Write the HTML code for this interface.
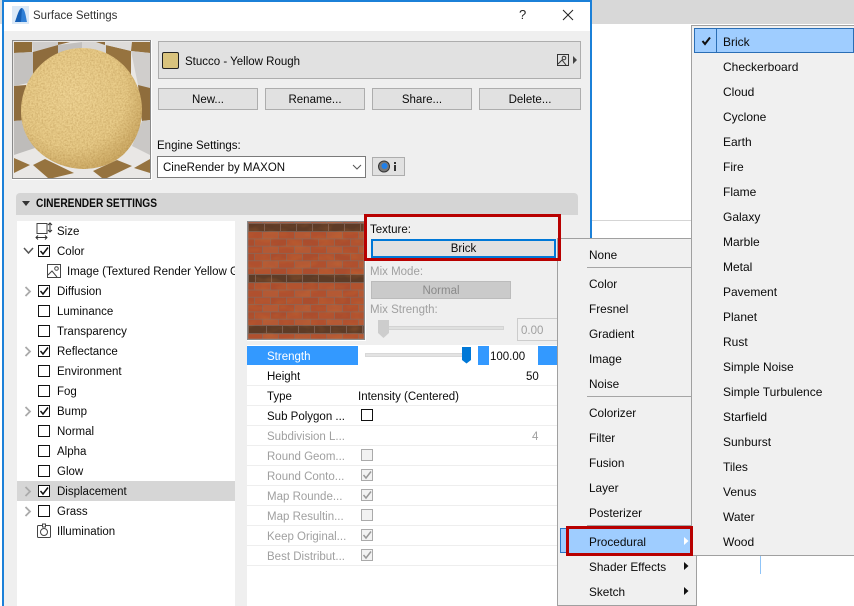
<!DOCTYPE html>
<html><head><meta charset="utf-8"><style>
*{box-sizing:border-box}
html,body{margin:0;padding:0;width:854px;height:606px;overflow:hidden;background:#fff}
body{position:relative;font:11.5px/16px "Liberation Sans",sans-serif;color:#0a0a0a}
.a,.t,.b{position:absolute}
.t{white-space:nowrap;height:14px}
.b{background:#e1e1e1;border:1px solid #adadad;text-align:center}
.g{color:#a0a0a0}
.m{font-size:11.8px;line-height:14px}
.sm{font-size:12px;line-height:14px}
.cb{position:absolute;width:12px;height:12px;border:1px solid #111;background:#fff}
.cb.d{border-color:#aaa;background:#f2f2f2}
.cb svg{position:absolute;left:0;top:0}
.s{position:absolute;left:247px;width:310px;height:1px;background:#eee}
.sep{position:absolute;left:587px;width:109px;height:1px;background:#a5a5a5}
</style></head><body>
<!-- background -->
<div class="a" style="left:592px;top:0;width:262px;height:24px;background:#d8d8d8"></div>
<div class="a" style="left:592px;top:220px;width:100px;height:1px;background:#d5d5d5"></div>
<div class="a" style="left:760px;top:555px;width:1px;height:19px;background:#8fc4f8"></div>
<div class="a" style="left:0;top:0;width:2px;height:24px;background:#ddd"></div>

<!-- dialog -->
<div class="a" style="left:2px;top:0;width:590px;height:606px;background:#efefef;border:2px solid #1b80d8;border-width:2px 2px 0 2px"></div>
<div class="a" style="left:4px;top:2px;width:586px;height:29px;background:#fff"></div>
<svg class="a" style="left:12px;top:6px" width="17" height="18" viewBox="0 0 17 18"><rect width="17" height="18" fill="#dbe9f7"/><path d="M3 16 C5 11 7 2 10 2 C13 3 14 11 15 16Z" fill="#2f7fd6"/><path d="M3 16 C5 11 7 2 10 2 L9 16Z" fill="#155fb5"/></svg>
<div class="t" style="left:33px;top:8px;color:#333">Surface Settings</div>
<div class="t" style="left:519px;top:7px;font-size:13px;color:#222">?</div>
<svg class="a" style="left:562px;top:9px" width="12" height="12"><path d="M1 1L11 11M11 1L1 11" stroke="#222" stroke-width="1" fill="none"/></svg>

<!-- preview -->
<svg class="a" style="left:12px;top:40px" width="140" height="140" viewBox="0 0 140 140">
<defs>
<radialGradient id="sp" cx="42%" cy="38%" r="68%"><stop offset="0" stop-color="#f0d595"/><stop offset=".65" stop-color="#e8cb88"/><stop offset="1" stop-color="#c9a661"/></radialGradient>
<filter id="nz" x="0" y="0" width="100%" height="100%" color-interpolation-filters="sRGB"><feTurbulence type="fractalNoise" baseFrequency=".6" numOctaves="2" seed="4"/><feColorMatrix values="0 0 0 0 .55  0 0 0 0 .38  0 0 0 0 .12  1.800 0 0 0 -.6"/><feComposite in2="SourceAlpha" operator="in"/></filter>
</defs>
<rect width="140" height="140" fill="#fff"/>
<rect x="1" y="1" width="137" height="137" fill="#e9e7e5"/>
<path d="M2 2H20V12L2 13Z" fill="#8f6d3a"/>
<path d="M20 2H46V5L21 12Z" fill="#cfcdcb"/>
<path d="M46 2H58L46 5Z" fill="#8e6c3d"/>
<path d="M46 5L70 2V30L46 40Z" fill="#c2c0be"/>
<path d="M70 2H84L94 5V14L70 10Z" fill="#d8d6d4"/>
<path d="M84 2H93V5Z" fill="#8e6c3d"/>
<path d="M2 13L21 12V42L2 46Z" fill="#c4c2c0"/>
<path d="M21 12L46 5V32L21 36Z" fill="#8e6c3d"/>
<path d="M94 5L119 11V35L94 18Z" fill="#96733f"/>
<path d="M93 2H120L119 11L94 5Z" fill="#dedcda"/>
<path d="M120 2H138V13L119 11Z" fill="#94713e"/>
<path d="M119 11L138 13V49L126 45Z" fill="#d0cecc"/>
<path d="M2 46L14 45V80L2 81Z" fill="#8e6c3d"/>
<path d="M126 45L138 48V80L130 81Z" fill="#8f6d3c"/>
<path d="M2 81L14 80L23 108L2 115Z" fill="#bebcba"/>
<path d="M130 81L138 80V115L120 106Z" fill="#cac8c6"/>
<path d="M2 118L18 125L2 133Z" fill="#96733f"/>
<path d="M21 125L33 119L62 133L41 138H36Z" fill="#96733f"/>
<path d="M81 131L105 120L120 126L95 138H90Z" fill="#96733f"/>
<path d="M122 128L138 119V133Z" fill="#96733f"/>
<path d="M9 71C9 38 35 8 70 8C105 8 130 38 130 70C130 88 122 104 112 114C100 125 85 129 70 129C50 128 35 120 24 109C14 98 9 86 9 71Z" fill="url(#sp)"/>
<path d="M9 71C9 38 35 8 70 8C105 8 130 38 130 70C130 88 122 104 112 114C100 125 85 129 70 129C50 128 35 120 24 109C14 98 9 86 9 71Z" fill="#000" filter="url(#nz)" opacity=".3"/>
<rect x=".5" y=".5" width="138" height="138" fill="none" stroke="#8a8a8a"/>
</svg>

<!-- swatch row -->
<div class="b" style="left:158px;top:41px;width:423px;height:38px"></div>
<div class="a" style="left:162px;top:52px;width:17px;height:17px;background:#d9c37d;border:1px solid #222;border-radius:2px"></div>
<div class="t" style="left:185px;top:54px">Stucco - Yellow Rough</div>
<svg class="a" style="left:556px;top:53px" width="22" height="14"><rect x="1.500" y="1.500" width="11" height="11" fill="none" stroke="#333"/><circle cx="8" cy="5" r="1.800" fill="none" stroke="#333"/><path d="M2 11L6 7L10 12" fill="none" stroke="#333"/><path d="M17 3L21 7L17 11Z" fill="#444"/></svg>

<div class="b" style="left:158px;top:88px;width:100px;height:22px;line-height:22px">New...</div>
<div class="b" style="left:265px;top:88px;width:100px;height:22px;line-height:22px">Rename...</div>
<div class="b" style="left:372px;top:88px;width:100px;height:22px;line-height:22px">Share...</div>
<div class="b" style="left:479px;top:88px;width:102px;height:22px;line-height:22px">Delete...</div>

<div class="t" style="left:157px;top:138px">Engine Settings:</div>
<div class="a" style="left:157px;top:156px;width:209px;height:22px;background:#fff;border:1px solid #7a7a7a"></div>
<div class="t" style="left:163px;top:160px">CineRender by MAXON</div>
<svg class="a" style="left:352px;top:163px" width="10" height="8"><path d="M1 2L5 6L9 2" fill="none" stroke="#555"/></svg>
<div class="b" style="left:372px;top:157px;width:33px;height:19px"></div>
<svg class="a" style="left:376px;top:158px" width="26" height="17"><circle cx="8" cy="8.500" r="5.500" fill="#777" stroke="#333"/><circle cx="8.500" cy="8" r="3" fill="#1f7fe8"/><rect x="18" y="7" width="2" height="6" fill="#333"/><rect x="18" y="4" width="2" height="2" fill="#333"/></svg>

<!-- section header -->
<div class="a" style="left:16px;top:193px;width:562px;height:22px;background:#d5d5d5;border-radius:4px 4px 0 0"></div>
<svg class="a" style="left:22px;top:201px" width="8" height="6"><path d="M0 0H8L4 5Z" fill="#333"/></svg>
<div class="t" style="left:36px;top:196px;font-weight:bold;transform:scaleX(.885);transform-origin:0 0">CINERENDER SETTINGS</div>

<!-- left list -->
<div class="a" style="left:17px;top:221px;width:218px;height:385px;background:#fff"></div>
<div class="a" style="left:17px;top:481px;width:218px;height:20px;background:#d6d6d6"></div>
<svg class="a" style="left:35px;top:222px" width="18" height="18"><rect x="2" y="1.500" width="10" height="10" fill="none" stroke="#444"/><path d="M15 1V10M13 3L15 1L17 3M13 8L15 10L17 8M1 15.500H12M3 13.500L1 15.500L3 17.500M10 13.500L12 15.500L10 17.500" fill="none" stroke="#333"/></svg>
<div class="t" style="left:57px;top:224px">Size</div>

<svg class="a" style="left:23px;top:247px" width="11" height="8"><path d="M1 1L5.500 6L10 1" fill="none" stroke="#555" stroke-width="1.500"/></svg>
<div class="cb" style="left:38px;top:245px"><svg width="10" height="10"><path d="M1.500 5L4 8L9 1.500" fill="none" stroke="#111" stroke-width="1.500"/></svg></div>
<div class="t" style="left:57px;top:244px">Color</div>

<svg class="a" style="left:47px;top:264px" width="15" height="14"><rect x=".5" y=".5" width="13" height="13" fill="none" stroke="#444"/><circle cx="9.500" cy="4.500" r="1.800" fill="none" stroke="#444"/><path d="M1 11L5 7L10 13" fill="none" stroke="#444"/></svg>
<div class="a" style="left:67px;top:264px;width:168px;height:16px;overflow:hidden;white-space:nowrap">Image (Textured Render Yellow GS</div>

<svg class="a" style="left:24px;top:286px" width="8" height="11"><path d="M1.500 1L6 5.500L1.500 10" fill="none" stroke="#aaa" stroke-width="1.800"/></svg>
<div class="cb" style="left:38px;top:285px"><svg width="10" height="10"><path d="M1.500 5L4 8L9 1.500" fill="none" stroke="#111" stroke-width="1.500"/></svg></div>
<div class="t" style="left:57px;top:284px">Diffusion</div>

<div class="cb" style="left:38px;top:305px"></div>
<div class="t" style="left:57px;top:304px">Luminance</div>
<div class="cb" style="left:38px;top:325px"></div>
<div class="t" style="left:57px;top:324px">Transparency</div>

<svg class="a" style="left:24px;top:346px" width="8" height="11"><path d="M1.500 1L6 5.500L1.500 10" fill="none" stroke="#aaa" stroke-width="1.800"/></svg>
<div class="cb" style="left:38px;top:345px"><svg width="10" height="10"><path d="M1.500 5L4 8L9 1.500" fill="none" stroke="#111" stroke-width="1.500"/></svg></div>
<div class="t" style="left:57px;top:344px">Reflectance</div>

<div class="cb" style="left:38px;top:365px"></div>
<div class="t" style="left:57px;top:364px">Environment</div>
<div class="cb" style="left:38px;top:385px"></div>
<div class="t" style="left:57px;top:384px">Fog</div>

<svg class="a" style="left:24px;top:406px" width="8" height="11"><path d="M1.500 1L6 5.500L1.500 10" fill="none" stroke="#aaa" stroke-width="1.800"/></svg>
<div class="cb" style="left:38px;top:405px"><svg width="10" height="10"><path d="M1.500 5L4 8L9 1.500" fill="none" stroke="#111" stroke-width="1.500"/></svg></div>
<div class="t" style="left:57px;top:404px">Bump</div>

<div class="cb" style="left:38px;top:425px"></div>
<div class="t" style="left:57px;top:424px">Normal</div>
<div class="cb" style="left:38px;top:445px"></div>
<div class="t" style="left:57px;top:444px">Alpha</div>
<div class="cb" style="left:38px;top:465px"></div>
<div class="t" style="left:57px;top:464px">Glow</div>

<svg class="a" style="left:24px;top:486px" width="8" height="11"><path d="M1.500 1L6 5.500L1.500 10" fill="none" stroke="#aaa" stroke-width="1.800"/></svg>
<div class="cb" style="left:38px;top:485px"><svg width="10" height="10"><path d="M1.500 5L4 8L9 1.500" fill="none" stroke="#111" stroke-width="1.500"/></svg></div>
<div class="t" style="left:57px;top:484px">Displacement</div>

<svg class="a" style="left:24px;top:506px" width="8" height="11"><path d="M1.500 1L6 5.500L1.500 10" fill="none" stroke="#aaa" stroke-width="1.800"/></svg>
<div class="cb" style="left:38px;top:505px"></div>
<div class="t" style="left:57px;top:504px">Grass</div>

<svg class="a" style="left:37px;top:523px" width="14" height="15"><rect x=".5" y="2.500" width="13" height="12" rx="1" fill="none" stroke="#444"/><circle cx="7" cy="9" r="3.500" fill="none" stroke="#444"/><rect x="5.500" y="1" width="3" height="3" fill="#fff" stroke="#444"/></svg>
<div class="t" style="left:57px;top:524px">Illumination</div>

<!-- right panel -->
<div class="a" style="left:247px;top:345px;width:310px;height:261px;background:#fff"></div>

<!-- brick -->
<svg class="a" style="left:247px;top:221px" width="119" height="120" viewBox="0 0 119 120">
<defs>
<pattern id="br" width="32" height="14.600" patternUnits="userSpaceOnUse" y="10.500"><rect width="32" height="14.600" fill="#8b6557"/><rect x="0" y=".5" width="15.200" height="6.500" fill="#b0502e"/><rect x="16" y=".5" width="15.200" height="6.500" fill="#b45934"/><rect x="-8" y="7.800" width="15.200" height="6.500" fill="#ab4d2d"/><rect x="8" y="7.800" width="15.200" height="6.500" fill="#b2532f"/><rect x="24" y="7.800" width="15.200" height="6.500" fill="#ab4d2d"/></pattern>
<filter id="bn" x="0" y="0" width="100%" height="100%" color-interpolation-filters="sRGB"><feTurbulence type="fractalNoise" baseFrequency=".07 .14" numOctaves="2" seed="9"/><feColorMatrix values="0 0 0 0 .8  0 0 0 0 .45  0 0 0 0 .2  2.600 0 0 0 -1.150"/></filter>
</defs>
<rect width="119" height="120" fill="url(#br)"/>
<rect x="0" y="2" width="119" height="9" fill="#7c5e50"/>
<rect x="0" y="53" width="119" height="9" fill="#7c5e50"/>
<rect x="0" y="104" width="119" height="9" fill="#7c5e50"/>
<g fill="#5e3b26">
<path d="M2 3H17V10H2ZM18 3H33V10H18ZM34 3H49V10H34ZM50 3H65V10H50ZM66 3H81V10H66ZM82 3H97V10H82ZM98 3H113V10H98ZM114 3H119V10H114Z"/>
<path d="M2 54H8V61H2ZM9 54H24V61H9ZM25 54H39V61H25ZM40 54H55V61H40ZM56 54H71V61H56ZM72 54H87V61H72ZM88 54H103V61H88ZM104 54H119V61H104Z"/>
<path d="M2 105H19V112H2ZM20 105H35V112H20ZM36 105H51V112H36ZM52 105H67V112H52ZM68 105H83V112H68ZM84 105H99V112H84ZM100 105H115V112H100ZM116 105H119V112H116Z"/>
</g>
<rect width="119" height="120" fill="#000" filter="url(#bn)" opacity=".22"/>
<rect x=".5" y=".5" width="117" height="118" fill="none" stroke="#8a8a8a" stroke-width="1.500"/>
<path d="M0 119.500H119M118.500 0V120" stroke="#fff"/>
</svg>

<!-- texture -->
<div class="t" style="left:370px;top:222px">Texture:</div>
<div class="a" style="left:371px;top:239px;width:185px;height:19px;background:#e1e1e1;border:2px solid #0078d7;text-align:center;line-height:17px">Brick</div>

<div class="t g" style="left:370px;top:264px">Mix Mode:</div>
<div class="b" style="left:371px;top:281px;width:140px;height:18px;background:#cacaca;border-color:#bbb;line-height:18px;color:#8a8a8a">Normal</div>
<div class="t g" style="left:370px;top:302px">Mix Strength:</div>
<div class="a" style="left:378px;top:326px;width:126px;height:4px;background:#dfe0df;border:1px solid #d3d3d3"></div>
<svg class="a" style="left:378px;top:320px" width="11" height="19"><path d="M0 0H11V13L5.500 18L0 13Z" fill="#cdcdcd"/></svg>
<div class="a" style="left:517px;top:318px;width:40px;height:23px;background:#f0f0f0;border:1px solid #ccc;border-right:0"></div>
<div class="t g" style="left:521px;top:323px">0.00</div>

<!-- strength -->
<div class="a" style="left:247px;top:346px;width:111px;height:19px;background:#3399ff"></div>
<div class="t" style="left:267px;top:349px;color:#fff">Strength</div>
<div class="a" style="left:365px;top:353px;width:104px;height:4px;background:#e3e3e3;border:1px solid #d8d8d8"></div>
<svg class="a" style="left:462px;top:347px" width="10" height="17"><path d="M0 0H9V13L4.500 16.500L0 13Z" fill="#0078d7"/></svg>
<div class="a" style="left:478px;top:346px;width:79px;height:19px;background:#3399ff"></div>
<div class="a" style="left:489px;top:346px;width:49px;height:19px;background:#fff"></div>
<div class="t" style="left:490px;top:349px">100.00</div>

<div class="s" style="top:385px"></div><div class="s" style="top:405px"></div><div class="s" style="top:425px"></div><div class="s" style="top:445px"></div><div class="s" style="top:465px"></div><div class="s" style="top:485px"></div><div class="s" style="top:505px"></div><div class="s" style="top:525px"></div><div class="s" style="top:545px"></div><div class="s" style="top:565px"></div>

<div class="t" style="left:267px;top:369px">Height</div><div class="t" style="left:526px;top:369px">50</div>
<div class="t" style="left:267px;top:389px">Type</div><div class="t" style="left:358px;top:389px">Intensity (Centered)</div>
<div class="t" style="left:267px;top:409px">Sub Polygon ...</div><div class="cb" style="left:361px;top:409px"></div>
<div class="t g" style="left:267px;top:429px">Subdivision L...</div><div class="t g" style="left:532px;top:429px">4</div>
<div class="t g" style="left:267px;top:449px">Round Geom...</div><div class="cb d" style="left:361px;top:449px"></div>
<div class="t g" style="left:267px;top:469px">Round Conto...</div><div class="cb d" style="left:361px;top:469px"><svg width="10" height="10"><path d="M1.500 5L4 8L9 1.500" fill="none" stroke="#999" stroke-width="1.500"/></svg></div>
<div class="t g" style="left:267px;top:489px">Map Rounde...</div><div class="cb d" style="left:361px;top:489px"><svg width="10" height="10"><path d="M1.500 5L4 8L9 1.500" fill="none" stroke="#999" stroke-width="1.500"/></svg></div>
<div class="t g" style="left:267px;top:509px">Map Resultin...</div><div class="cb d" style="left:361px;top:509px"></div>
<div class="t g" style="left:267px;top:529px">Keep Original...</div><div class="cb d" style="left:361px;top:529px"><svg width="10" height="10"><path d="M1.500 5L4 8L9 1.500" fill="none" stroke="#999" stroke-width="1.500"/></svg></div>
<div class="t g" style="left:267px;top:549px">Best Distribut...</div><div class="cb d" style="left:361px;top:549px"><svg width="10" height="10"><path d="M1.500 5L4 8L9 1.500" fill="none" stroke="#999" stroke-width="1.500"/></svg></div>

<!-- main menu -->
<div class="a" style="left:557px;top:238px;width:140px;height:368px;background:#f0f0f0;border:1px solid #a0a0a0"></div>
<div class="a" style="left:364px;top:214px;width:197px;height:47px;border:3px solid #b80000"></div>
<div class="t m" style="left:589px;top:248px">None</div>
<div class="sep" style="top:267px"></div>
<div class="t m" style="left:589px;top:277px">Color</div>
<div class="t m" style="left:589px;top:302px">Fresnel</div>
<div class="t m" style="left:589px;top:327px">Gradient</div>
<div class="t m" style="left:589px;top:352px">Image</div>
<div class="t m" style="left:589px;top:377px">Noise</div>
<div class="sep" style="top:396px"></div>
<div class="t m" style="left:589px;top:406px">Colorizer</div>
<div class="t m" style="left:589px;top:431px">Filter</div>
<div class="t m" style="left:589px;top:456px">Fusion</div>
<div class="t m" style="left:589px;top:481px">Layer</div>
<div class="t m" style="left:589px;top:506px">Posterizer</div>
<div class="sep" style="top:525px"></div>
<div class="t m" style="left:589px;top:560px">Shader Effects</div>
<svg class="a" style="left:684px;top:562px" width="5" height="8"><path d="M0 0L4.500 4L0 8Z" fill="#111"/></svg>
<div class="t m" style="left:589px;top:585px">Sketch</div>
<svg class="a" style="left:684px;top:587px" width="5" height="8"><path d="M0 0L4.500 4L0 8Z" fill="#111"/></svg>

<!-- submenu -->
<div class="a" style="left:691px;top:25px;width:165px;height:531px;background:#f0f0f0;border:1px solid #a0a0a0"></div>
<div class="a" style="left:694px;top:28px;width:160px;height:25px;background:#9fcdff;border:1px solid #2a6eb5"></div>
<div class="a" style="left:716px;top:28px;width:1px;height:25px;background:#2a6eb5"></div>
<svg class="a" style="left:701px;top:36px" width="10" height="10"><path d="M1.500 5L4 8L9 1.500" fill="none" stroke="#111" stroke-width="2"/></svg>
<div class="t sm" style="left:723px;top:35px">Brick</div>
<div class="t sm" style="left:723px;top:60px">Checkerboard</div>
<div class="t sm" style="left:723px;top:85px">Cloud</div>
<div class="t sm" style="left:723px;top:110px">Cyclone</div>
<div class="t sm" style="left:723px;top:135px">Earth</div>
<div class="t sm" style="left:723px;top:160px">Fire</div>
<div class="t sm" style="left:723px;top:185px">Flame</div>
<div class="t sm" style="left:723px;top:210px">Galaxy</div>
<div class="t sm" style="left:723px;top:235px">Marble</div>
<div class="t sm" style="left:723px;top:260px">Metal</div>
<div class="t sm" style="left:723px;top:285px">Pavement</div>
<div class="t sm" style="left:723px;top:310px">Planet</div>
<div class="t sm" style="left:723px;top:335px">Rust</div>
<div class="t sm" style="left:723px;top:360px">Simple Noise</div>
<div class="t sm" style="left:723px;top:385px">Simple Turbulence</div>
<div class="t sm" style="left:723px;top:410px">Starfield</div>
<div class="t sm" style="left:723px;top:435px">Sunburst</div>
<div class="t sm" style="left:723px;top:460px">Tiles</div>
<div class="t sm" style="left:723px;top:485px">Venus</div>
<div class="t sm" style="left:723px;top:510px">Water</div>
<div class="t sm" style="left:723px;top:535px">Wood</div>

<!-- procedural highlight, above the submenu -->
<div class="a" style="left:560px;top:528px;width:8px;height:25px;background:#9fcdff;border:1px solid #2a76c6;border-right:0"></div>
<div class="a" style="left:566px;top:526px;width:127px;height:30px;background:#9fcdff;border:3px solid #b80000"></div>
<div class="t m" style="left:589px;top:535px">Procedural</div>
<svg class="a" style="left:684px;top:537px" width="5" height="8"><path d="M0 0L4.500 4L0 8Z" fill="#fff"/></svg>
</body></html>
